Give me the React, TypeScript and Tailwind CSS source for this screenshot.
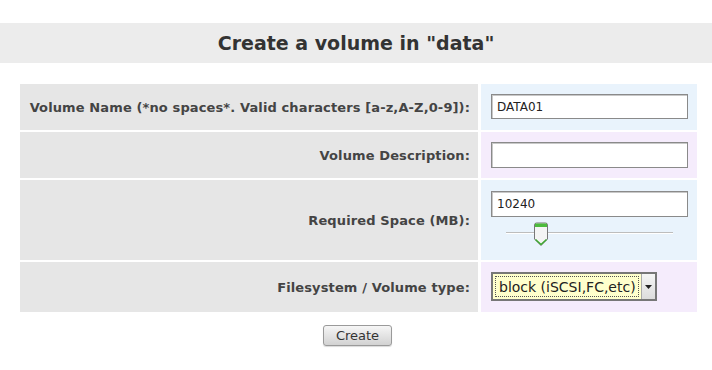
import React from "react";

const labelCls =
  "bg-[#e6e6e6] flex items-center justify-end pr-[8px] text-[13px] font-bold text-[#444] leading-none tracking-[0.12px]";

export default function App() {
  return (
    <div className="w-[712px] h-[370px] bg-white overflow-hidden" style={{ fontFamily: '"DejaVu Sans", sans-serif' }}>
      <div className="h-[23px]" />
      <div className="h-[40px] bg-[#ececec] flex items-center justify-center">
        <h1 className="text-[19px] font-bold text-[#333] leading-none">Create a volume in "data"</h1>
      </div>
      <div className="h-[21px]" />
      <div className="ml-[20px] grid grid-cols-[458px_216px] gap-x-[3px] gap-y-[2px]">
        <div className={`${labelCls} h-[46px]`}>Volume Name (*no spaces*. Valid characters [a-z,A-Z,0-9]):</div>
        <div className="bg-[#e9f3fc] h-[46px] pl-[10px] pt-[10px]">
          <div className="w-[197px] h-[25px] bg-white border border-[#8a8a8a] shadow-[inset_1px_1px_0_#c8c8c8] flex items-center pl-[5px] text-[12px] text-[#222]">
            DATA01
          </div>
        </div>

        <div className={`${labelCls} h-[46px]`}>Volume Description:</div>
        <div className="bg-[#f5ecfc] h-[46px] pl-[10px] pt-[10px]">
          <div className="w-[197px] h-[26px] bg-white border border-[#8a8a8a] shadow-[inset_1px_1px_0_#c8c8c8]" />
        </div>

        <div className={`${labelCls} h-[80px]`}>Required Space (MB):</div>
        <div className="bg-[#e9f3fc] h-[80px] pl-[10px] pt-[11px]">
          <div className="w-[197px] h-[26px] bg-white border border-[#8a8a8a] shadow-[inset_1px_1px_0_#c8c8c8] flex items-center pl-[5px] text-[12px] text-[#222]">
            10240
          </div>
          <div className="relative w-[167px] h-[26px] ml-[15px] mt-[4px]">
            <div className="absolute left-0 right-0 top-[11px] h-[2px] bg-[#bdbdbd] border-b border-white" />
            <svg className="absolute left-[27px] top-[1px]" width="16" height="26" viewBox="0 0 16 26">
              <path d="M1.5 3 Q1.5 1 3.5 1 L12.5 1 Q14.5 1 14.5 3 L14.5 17 L8 23.5 L1.5 17 Z" fill="#f4f4f4" stroke="#777" strokeWidth="1" />
              <rect x="2" y="1.5" width="12" height="3.5" fill="#4cbb3c" />
              <path d="M2.5 17.5 L8 22.5 L13.5 17.5" fill="none" stroke="#3ea832" strokeWidth="1.6" />
            </svg>
          </div>
        </div>

        <div className={`${labelCls} h-[50px]`}>Filesystem / Volume type:</div>
        <div className="bg-[#f5ecfc] h-[50px] pl-[10px] pt-[10px]">
          <div className="w-[166px] h-[29px] border-2 border-[#777] bg-[#ffffcc] flex items-stretch">
            <div className="flex-1 flex items-center p-[2px]">
              <div className="h-full w-full border border-dotted border-[#555] flex items-center pl-[3px] text-[14px] text-[#222] leading-none whitespace-nowrap overflow-hidden">
                block (iSCSI,FC,etc)
              </div>
            </div>
            <div className="w-[14px] bg-gradient-to-b from-[#f6f6f6] to-[#dcdcdc] border-l border-[#aaa] flex items-center justify-center">
              <svg width="7" height="4" viewBox="0 0 7 4">
                <path d="M0 0 L7 0 L3.5 4 Z" fill="#222" />
              </svg>
            </div>
          </div>
        </div>
      </div>
      <div className="flex justify-center mt-[13px] pl-[3px]">
        <button className="w-[69px] h-[21px] rounded-[3px] border border-[#9a9a9a] bg-gradient-to-b from-[#f6f6f6] to-[#d2d2d2] text-[13px] text-[#333] leading-none shadow-[0_1px_1px_rgba(0,0,0,0.15)]">
          Create
        </button>
      </div>
    </div>
  );
}
